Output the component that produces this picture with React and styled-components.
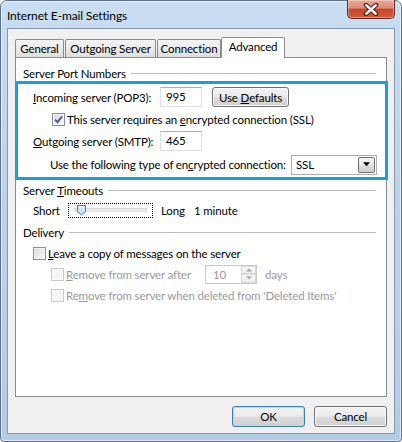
import React from "react"
import styled, { createGlobalStyle } from "styled-components"

const GlobalStyle = createGlobalStyle`
  html, body {
    margin: 0;
    padding: 0;
    width: 402px;
    height: 442px;
    overflow: hidden;
  }
  body {
    font-family: Lato, "Liberation Sans", sans-serif;
    font-size: 11.5px;
    letter-spacing: -0.15px;
    color: #000;
    white-space: nowrap;
  }
`

const Window = styled.div`
  box-sizing: border-box;
  width: 402px;
  height: 442px;
  display: flex;
  flex-direction: column;
  padding: 0 6px 7px;
  border: 1px solid #5d7188;
  border-radius: 7px 7px 4px 4px;
  background: linear-gradient(180deg, #cadef2 0%, #bdd4eb 35%, #b3cce6 100%);
  box-shadow: inset 0 0 0 1px rgba(255, 255, 255, 0.55);
`

const TitleBar = styled.div`
  display: flex;
  justify-content: space-between;
  height: 27px;
  flex: none;
`

const Title = styled.div`
  line-height: 27px;
  font-size: 12px;
  padding-top: 1px;
`

const CloseButton = styled.div`
  box-sizing: border-box;
  width: 48px;
  height: 19px;
  margin-top: -1px;
  display: flex;
  align-items: center;
  justify-content: center;
  border: 1px solid #5c2a22;
  border-top: none;
  border-radius: 0 0 5px 5px;
  background: linear-gradient(180deg, #e9a996 0%, #dc8a77 45%, #c8462d 52%, #d35a34 100%);
  box-shadow: inset 0 0 0 1px rgba(255, 255, 255, 0.35);
`

const Client = styled.div`
  flex: 1;
  display: flex;
  flex-direction: column;
  padding: 8px 7px 0;
  border: 1px solid #8598b0;
  background: #f0f0f0;
`

const TabStrip = styled.div`
  position: relative;
  z-index: 1;
  display: flex;
  align-items: flex-start;
  gap: 1px;
  height: 21px;
  margin-bottom: -1px;
`

const Tab = styled.div`
  box-sizing: border-box;
  width: ${(p) => p.$width}px;
  height: ${(p) => (p.$active ? 21 : 18)}px;
  margin-top: ${(p) => (p.$active ? 0 : 2)}px;
  margin-left: ${(p) => (p.$active ? -1 : 0)}px;
  border: 1px solid #898c95;
  border-bottom: none;
  border-radius: 2px 2px 0 0;
  background: ${(p) =>
    p.$active ? "#fff" : "linear-gradient(180deg, #f3f3f3 0%, #ebebeb 50%, #dedede 100%)"};
  text-align: center;
  line-height: ${(p) => (p.$active ? 18 : 17)}px;
`

const Panel = styled.div`
  box-sizing: border-box;
  height: 340px;
  display: flex;
  flex-direction: column;
  border: 1px solid #898c95;
  background: #fff;
`

const GroupHeader = styled.div`
  display: flex;
  align-items: center;
  height: 14px;
  margin: ${(p) => p.$top}px 10px 0 7px;
  &::after {
    content: "";
    flex: 1;
    margin-left: 5px;
    border-top: 1px solid #bdbdbd;
  }
`

const Highlight = styled.div`
  margin: 1px -2px 0 -1px;
  padding-top: 2px;
  border: 3px solid #1b9fdb;
`

const Row = styled.div`
  display: flex;
  align-items: center;
  height: ${(p) => p.$h}px;
  margin-top: ${(p) => p.$top || 0}px;
  padding-left: ${(p) => p.$indent}px;
  padding-right: ${(p) => p.$right || 0}px;
  color: ${(p) => (p.$disabled ? "#9a9a9a" : "#000")};
`

const FieldLabel = styled.span`
  width: ${(p) => p.$width}px;
  flex: ${(p) => (p.$width ? "none" : 1)};
`

const U = styled.span`
  text-decoration: underline;
`

const TextBox = styled.div`
  box-sizing: border-box;
  width: 42px;
  height: 20px;
  padding-left: 5px;
  line-height: 18px;
  border: 1px solid #dbdfe6;
  border-top-color: #abadb3;
  background: #fff;
`

const Button = styled.div`
  box-sizing: border-box;
  width: ${(p) => p.$width}px;
  height: ${(p) => p.$height || 21}px;
  margin-left: ${(p) => p.$gap || 0}px;
  display: flex;
  align-items: center;
  justify-content: center;
  border: 1px solid ${(p) => (p.$primary ? "#3c7fb1" : "#707070")};
  border-radius: 3px;
  background: linear-gradient(180deg, #f2f2f2 0%, #ebebeb 48%, #dddddd 52%, #cfcfcf 100%);
  box-shadow: inset 0 0 0 1px ${(p) => (p.$primary ? "#9fe2fb" : "#fbfbfb")};
`

const CheckBox = styled.span`
  box-sizing: border-box;
  flex: none;
  width: 13px;
  height: 13px;
  margin-right: ${(p) => p.$gap || 2}px;
  display: flex;
  align-items: center;
  justify-content: center;
  border: 1px solid ${(p) => (p.$disabled ? "#c9c9c9" : "#8e8f8f")};
  background: ${(p) =>
    p.$disabled ? "#f4f4f4" : "linear-gradient(135deg, #d5d5d5 0%, #eeeeee 60%, #fbfbfb 100%)"};
  box-shadow: inset 0 0 0 1px ${(p) => (p.$disabled ? "#fbfbfb" : "#f4f4f4")};
`

const Select = styled.div`
  box-sizing: border-box;
  width: 86px;
  height: 20px;
  display: flex;
  align-items: center;
  padding: 0 1px 0 4px;
  border: 1px solid #abadb3;
  background: #fff;
`

const SelectText = styled.span`
  flex: 1;
`

const DropButton = styled.span`
  box-sizing: border-box;
  width: 17px;
  height: 16px;
  display: flex;
  align-items: center;
  justify-content: center;
  border: 1px solid #707070;
  border-radius: 2px;
  background: linear-gradient(180deg, #f2f2f2 0%, #ebebeb 48%, #dddddd 52%, #cfcfcf 100%);
`

const SliderFocus = styled.div`
  position: relative;
  box-sizing: border-box;
  width: 85px;
  height: 15px;
  margin: 0 8px 0 0;
  padding: 0 5px;
  display: flex;
  align-items: center;
  border: 1px dotted #000;
`

const SliderTrack = styled.div`
  flex: 1;
  height: 2px;
  border: 1px solid #d6d6d6;
  border-bottom-color: #e7e7e7;
  background: #e9ecee;
`

const SliderThumb = styled.svg`
  position: absolute;
  left: 7px;
  top: 1px;
`

const Spinner = styled.div`
  box-sizing: border-box;
  width: 52px;
  height: 19px;
  display: flex;
  margin-right: 8px;
  border: 1px solid #c9c9c9;
  background: #fff;
`

const SpinnerText = styled.span`
  flex: 1;
  padding-left: 7px;
  line-height: 17px;
  color: #9a9a9a;
`

const SpinnerArrows = styled.div`
  width: 15px;
  display: flex;
  flex-direction: column;
`

const SpinnerArrow = styled.span`
  flex: 1;
  display: flex;
  align-items: center;
  justify-content: center;
  border: 1px solid #d9d9d9;
  background: linear-gradient(180deg, #f7f7f7, #ececec);
`

const ButtonRow = styled.div`
  display: flex;
  justify-content: flex-end;
  gap: 9px;
  margin-top: 9px;
`

const Check = () => (
  <svg width="9" height="9" viewBox="0 0 9 9">
    <path d="M1 4.6 L3.5 7.2 L8 1.3" fill="none" stroke="#4a5f97" strokeWidth="1.9" />
  </svg>
)

const Triangle = ({ dir = "down", color = "#000", size = 7 }) => (
  <svg width={size} height={Math.ceil(size / 2) + 1} viewBox="0 0 8 5">
    {dir === "down" ? <path d="M0 0 H8 L4 4.5 Z" fill={color} /> : <path d="M0 4.5 H8 L4 0 Z" fill={color} />}
  </svg>
)

const CloseIcon = () => (
  <svg width="16" height="13" viewBox="0 0 16 13">
    <path d="M3 2 L13 11 M13 2 L3 11" stroke="#5a241c" strokeWidth="4.6" strokeLinecap="round" />
    <path d="M3.4 2.4 L12.6 10.6 M12.6 2.4 L3.4 10.6" stroke="#fff" strokeWidth="2.6" strokeLinecap="round" />
  </svg>
)

const tabs = [
  { label: "General", width: 49 },
  { label: "Outgoing Server", width: 91 },
  { label: "Connection", width: 64 },
  { label: "Advanced", width: 64, active: true },
]

export default function App() {
  return (
    <>
      <GlobalStyle />
      <Window>
        <TitleBar>
          <Title>Internet E-mail Settings</Title>
          <CloseButton>
            <CloseIcon />
          </CloseButton>
        </TitleBar>
        <Client>
          <TabStrip>
            {tabs.map((t) => (
              <Tab key={t.label} $width={t.width} $active={t.active}>
                {t.label}
              </Tab>
            ))}
          </TabStrip>
          <Panel>
            <GroupHeader $top={8}>Server Port Numbers</GroupHeader>
            <Highlight>
              <Row $h={22} $indent={15}>
                <FieldLabel $width={127}>
                  <U>I</U>ncoming server (POP3):
                </FieldLabel>
                <TextBox>995</TextBox>
                <Button $width={77} $height={20} $gap={10}>
                  Use&nbsp;<U>D</U>efaults
                </Button>
              </Row>
              <Row $h={22} $indent={34}>
                <CheckBox>
                  <Check />
                </CheckBox>
                <span>
                  This server requires an <U>e</U>ncrypted connection (SSL)
                </span>
              </Row>
              <Row $h={22} $indent={15}>
                <FieldLabel $width={127}>
                  <U>O</U>utgoing server (SMTP):
                </FieldLabel>
                <TextBox>465</TextBox>
              </Row>
              <Row $h={25} $indent={32} $right={8}>
                <FieldLabel>
                  Use the following type of en<U>c</U>rypted connection:
                </FieldLabel>
                <Select>
                  <SelectText>SSL</SelectText>
                  <DropButton>
                    <Triangle />
                  </DropButton>
                </Select>
              </Row>
            </Highlight>

            <GroupHeader $top={3}>
              Server&nbsp;<U>T</U>imeouts
            </GroupHeader>
            <Row $h={16} $top={5} $indent={17}>
              <FieldLabel $width={35}>Short</FieldLabel>
              <SliderFocus>
                <SliderTrack />
                <SliderThumb width="11" height="11" viewBox="0 0 11 11">
                  <path
                    d="M1.5 0.5 H9.5 V6.5 L5.5 10 L1.5 6.5 Z"
                    fill="#cde8f8"
                    stroke="#3f7fb2"
                    strokeWidth="1"
                  />
                  <path d="M3 2 H8" stroke="#fff" strokeWidth="1" />
                </SliderThumb>
              </SliderFocus>
              <FieldLabel $width={33}>Long</FieldLabel>
              <span>1 minute</span>
            </Row>

            <GroupHeader $top={7}>Delivery</GroupHeader>
            <Row $h={16} $top={6} $indent={17}>
              <CheckBox />
              <span>
                <U>L</U>eave a copy of messages on the server
              </span>
            </Row>
            <Row $h={20} $top={3} $indent={35} $disabled>
              <CheckBox $disabled />
              <FieldLabel $width={139}>
                <U>R</U>emove from server after
              </FieldLabel>
              <Spinner>
                <SpinnerText>10</SpinnerText>
                <SpinnerArrows>
                  <SpinnerArrow>
                    <Triangle dir="up" color="#a8a8a8" size={6} />
                  </SpinnerArrow>
                  <SpinnerArrow>
                    <Triangle dir="down" color="#a8a8a8" size={6} />
                  </SpinnerArrow>
                </SpinnerArrows>
              </Spinner>
              <span>days</span>
            </Row>
            <Row $h={16} $top={3} $indent={35} $disabled>
              <CheckBox $disabled />
              <span>
                Re<U>m</U>ove from server when deleted from 'Deleted Items'
              </span>
            </Row>
          </Panel>
          <ButtonRow>
            <Button $width={73} $primary>
              OK
            </Button>
            <Button $width={73}>Cancel</Button>
          </ButtonRow>
        </Client>
      </Window>
    </>
  )
}
